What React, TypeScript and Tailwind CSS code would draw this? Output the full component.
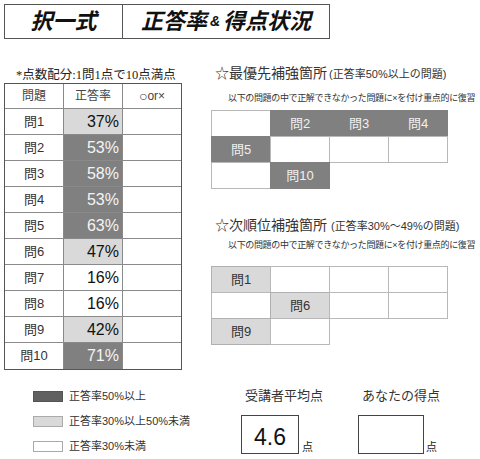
import React from "react";

const FONT = "font-['Liberation_Sans','Noto_Sans_CJK_JP',sans-serif]";

type Shade = "dark" | "light" | "none";

const rows: { q: string; rate: string; shade: Shade }[] = [
  { q: "問1", rate: "37%", shade: "light" },
  { q: "問2", rate: "53%", shade: "dark" },
  { q: "問3", rate: "58%", shade: "dark" },
  { q: "問4", rate: "53%", shade: "dark" },
  { q: "問5", rate: "63%", shade: "dark" },
  { q: "問6", rate: "47%", shade: "light" },
  { q: "問7", rate: "16%", shade: "none" },
  { q: "問8", rate: "16%", shade: "none" },
  { q: "問9", rate: "42%", shade: "light" },
  { q: "問10", rate: "71%", shade: "dark" },
];

const shadeClass = (s: Shade) =>
  s === "dark"
    ? "bg-[#808080] text-[#f4f4f4]"
    : s === "light"
      ? "bg-[#d9d9d9] text-[#111]"
      : "bg-white text-[#111]";

// a cell of the review grids (59x26, borders overlap)
function Cell({ label, shade }: { label?: string; shade: Shade }) {
  const fill =
    shade === "dark"
      ? "bg-[#808080] border-[#808080] text-[#f0f0f0]"
      : shade === "light"
        ? "bg-[#d9d9d9] border-[#b0b0b0] text-[#333]"
        : "bg-white border-[#b8b8b8]";
  return (
    <div
      className={`-mb-px -mr-px flex h-[27px] w-[60px] items-center justify-center border text-[13px] ${fill}`}
    >
      {label}
    </div>
  );
}

function ReviewGrid({ grid }: { grid: { label?: string; shade: Shade }[][] }) {
  return (
    <div className="flex flex-col">
      {grid.map((r, i) => (
        <div key={i} className="flex">
          {r.map((c, j) => (
            <Cell key={j} label={c.label} shade={c.shade} />
          ))}
        </div>
      ))}
    </div>
  );
}

export default function App() {
  return (
    <div className={`h-[459px] w-[480px] overflow-hidden bg-white text-[#222] ${FONT}`}>
      {/* title */}
      <div className="ml-[4px] mt-[4px] flex h-[35px] w-[326px] border border-[#555]">
        <div className="flex w-[118px] items-center justify-center border-r border-[#555] text-[22px] font-bold italic text-[#111]">
          択一式
        </div>
        <div className="flex flex-1 items-center justify-center text-[22px] font-bold italic text-[#111]">
          正答率<span className="mx-[3px] text-[14px]">&amp;</span>得点状況
        </div>
      </div>

      <div className="flex">
        {/* left: table */}
        <div className="ml-[4px] w-[178px] shrink-0">
          <div className="flex h-[44px] items-end pl-[12px]">
            <span className="whitespace-nowrap font-['Liberation_Serif','Noto_Sans_CJK_JP',serif] text-[12.5px] leading-[16px] text-[#222]">
              *点数配分:1問1点で10点満点
            </span>
          </div>
          <div className="border border-[#555]">
            <div className="flex h-[25px] border-b border-[#8a8a8a] text-[12px] text-[#444]">
              <div className="flex w-[59px] items-center justify-center border-r border-[#8a8a8a]">問題</div>
              <div className="flex w-[59px] items-center justify-center border-r border-[#8a8a8a]">正答率</div>
              <div className="flex flex-1 items-center justify-center text-[12px]">
                <span className="text-[14px]">○</span>or×
              </div>
            </div>
            {rows.map((r, i) => (
              <div
                key={r.q}
                className={`flex h-[26px] ${i < rows.length - 1 ? "border-b border-[#8a8a8a]" : ""}`}
              >
                <div className="flex w-[59px] items-center justify-center border-r border-[#8a8a8a] text-[13px] text-[#333]">
                  {r.q}
                </div>
                <div
                  className={`flex w-[59px] items-center justify-end border-r border-[#8a8a8a] pr-[3px] text-[16px] ${shadeClass(r.shade)}`}
                >
                  {r.rate}
                </div>
                <div className="flex-1" />
              </div>
            ))}
          </div>
        </div>

        {/* right: review areas */}
        <div className="ml-[29px] flex shrink-0 flex-col">
          <div className="mt-[26px] whitespace-nowrap pl-[4px] text-[14px] leading-[16px] text-[#333]">
            ☆最優先補強箇所<span className="ml-[2px] text-[11px]">(正答率50%以上の問題)</span>
          </div>
          <div className="mt-[10px] whitespace-nowrap pl-[17px] text-[9px] leading-[12px] tracking-[-0.35px] text-[#333]">
            以下の問題の中で正解できなかった問題に×を付け重点的に復習
          </div>
          <div className="mt-[6px]">
            <ReviewGrid
              grid={[
                [{ shade: "none" }, { label: "問2", shade: "dark" }, { label: "問3", shade: "dark" }, { label: "問4", shade: "dark" }],
                [{ label: "問5", shade: "dark" }, { shade: "none" }, { shade: "none" }, { shade: "none" }],
                [{ shade: "none" }, { label: "問10", shade: "dark" }],
              ]}
            />
          </div>

          <div className="mt-[29px] whitespace-nowrap pl-[4px] text-[14px] leading-[16px] text-[#333]">
            ☆次順位補強箇所<span className="ml-[4px] text-[11px]">(正答率30%～49%の問題)</span>
          </div>
          <div className="mt-[5px] whitespace-nowrap pl-[17px] text-[9px] leading-[12px] tracking-[-0.35px] text-[#333]">
            以下の問題の中で正解できなかった問題に×を付け重点的に復習
          </div>
          <div className="mt-[15px]">
            <ReviewGrid
              grid={[
                [{ label: "問1", shade: "light" }, { shade: "none" }, { shade: "none" }, { shade: "none" }],
                [{ shade: "none" }, { label: "問6", shade: "light" }, { shade: "none" }, { shade: "none" }],
                [{ label: "問9", shade: "light" }, { shade: "none" }],
              ]}
            />
          </div>
        </div>
      </div>

      {/* bottom: legend and scores */}
      <div className="flex">
        <div className="mt-[14px] w-[241px] shrink-0 pl-[33px] text-[11px] text-[#333]">
          <div className="flex h-[25px] items-center">
            <div className="h-[11px] w-[30px] border border-[#555] bg-[#606060]" />
            <span className="ml-[6px]">正答率50%以上</span>
          </div>
          <div className="flex h-[25px] items-center">
            <div className="h-[11px] w-[30px] border border-[#aaa] bg-[#d9d9d9]" />
            <span className="ml-[6px]">正答率30%以上50%未満</span>
          </div>
          <div className="flex h-[25px] items-center">
            <div className="h-[11px] w-[30px] border border-[#aaa] bg-white" />
            <span className="ml-[6px]">正答率30%未満</span>
          </div>
        </div>

        <div className="w-[117px] shrink-0">
          <div className="mt-[18px] w-[86px] text-center text-[13px] leading-[16px] text-[#333]">
            受講者平均点
          </div>
          <div className="mt-[11px] flex items-end">
            <div className="flex h-[39px] w-[58px] items-end justify-center border border-[#444] pb-[1px] text-[23px] leading-[30px] text-[#111]">
              4.6
            </div>
            <span className="ml-[3px] text-[11px] leading-[14px]">点</span>
          </div>
        </div>

        <div className="w-[120px] shrink-0">
          <div className="mt-[18px] w-[86px] text-center text-[13px] leading-[16px] text-[#333]">
            あなたの得点
          </div>
          <div className="mt-[11px] flex items-end">
            <div className="h-[39px] w-[66px] border border-[#444]" />
            <span className="ml-[2px] text-[11px] leading-[14px]">点</span>
          </div>
        </div>
      </div>
    </div>
  );
}
